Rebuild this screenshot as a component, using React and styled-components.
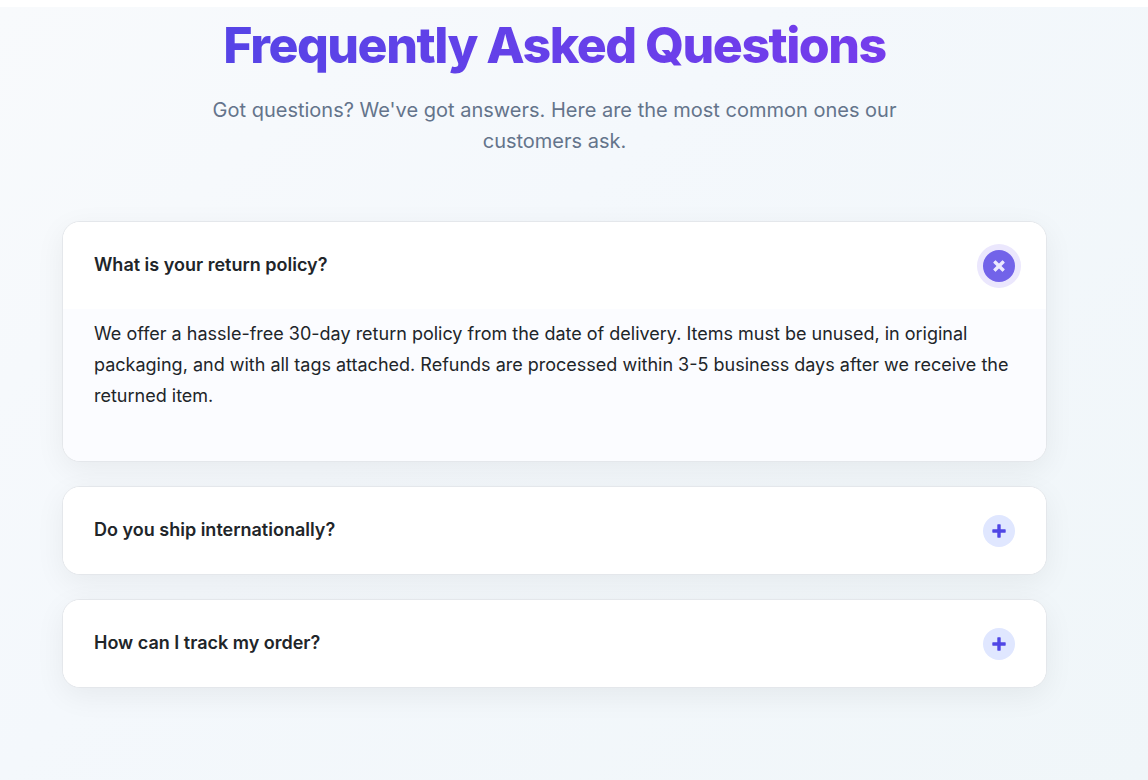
import { useState } from 'react';
import styled, { createGlobalStyle } from 'styled-components';

const faqs = [
    {
        id: 'returns',
        question: 'What is your return policy?',
        answer:
            'We offer a hassle-free 30-day return policy from the date of delivery. Items must be unused, in original packaging, and with all tags attached. Refunds are processed within 3-5 business days after we receive the returned item.',
    },
    {
        id: 'shipping',
        question: 'Do you ship internationally?',
        answer: 'Yes, we ship to most countries. Shipping costs are calculated at checkout.',
    },
    {
        id: 'tracking',
        question: 'How can I track my order?',
        answer: 'You will receive a tracking link by email as soon as your order ships.',
    },
];

const GlobalStyle = createGlobalStyle`
  *,
  *::before,
  *::after {
    box-sizing: border-box;
  }

  body {
    margin: 0;
    background: #fff;
    font-family: Inter, "Liberation Sans", sans-serif;
    color: #212529;
  }
`;

const Page = styled.div`
  min-height: 100vh;
  padding-top: 7px;
  display: flex;
  flex-direction: column;
`;

const Section = styled.section`
  flex: 1;
  padding: 8px 101px 92px 62px;
  background: linear-gradient(135deg, #f8fafc 0%, #f4f8fc 40%, #f0f6f9 100%);
`;

const Header = styled.header`
  margin-bottom: 64px;
  text-align: center;
`;

const Title = styled.h2`
  margin: 0 0 20px;
  font-size: 50px;
  line-height: 60px;
  font-weight: 800;
  letter-spacing: -0.03em;
  color: transparent;
  background: linear-gradient(90deg, #4f46e5, #7c3aed);
  background-clip: text;
  -webkit-background-clip: text;
`;

const Subtitle = styled.p`
  max-width: 700px;
  margin: 0 auto;
  font-size: 20px;
  line-height: 31px;
  color: #64748b;
`;

const Accordion = styled.div`
  display: flex;
  flex-direction: column;
  gap: 24px;
`;

const Item = styled.div`
  overflow: hidden;
  background: #fff;
  border: 1px solid #e4e7eb;
  border-radius: 18px;
  box-shadow: 0 8px 30px rgba(0, 0, 0, 0.06);
`;

const ItemHeading = styled.h3`
  margin: 0;
`;

const Question = styled.button`
  width: 100%;
  padding: 28px 31px 27px;
  display: flex;
  align-items: flex-start;
  justify-content: space-between;
  border: 0;
  background: #fff;
  color: inherit;
  font-family: inherit;
  font-size: 18px;
  line-height: 30px;
  font-weight: 600;
  text-align: left;
  cursor: pointer;
`;

const Toggle = styled.span`
  flex-shrink: 0;
  width: 32px;
  height: 32px;
  display: flex;
  align-items: center;
  justify-content: center;
  border-radius: 50%;
  color: ${({ $open }) => ($open ? '#ece9fe' : '#4f46e5')};
  background: ${({ $open }) => ($open ? '#7263e9' : '#e0e7ff')};
  box-shadow: ${({ $open }) => ($open ? '0 0 0 6px #ebe7fd' : 'none')};
  transform: ${({ $open }) => ($open ? 'rotate(45deg)' : 'none')};
  transition: transform 0.3s;
`;

const Answer = styled.div`
  padding: 9px 31px 50px;
  background: #fbfcff;
  font-size: 18px;
  line-height: 31px;
`;

function PlusIcon() {
    return (
        <svg width="14" height="14" viewBox="0 0 14 14" fill="currentColor" aria-hidden="true">
            <rect x="5.3" y="0.3" width="3.4" height="13.4" rx="0.6" />
            <rect x="0.3" y="5.3" width="13.4" height="3.4" rx="0.6" />
        </svg>
    );
}

export default function App() {
    const [openId, setOpenId] = useState('returns');

    return (
        <>
            <GlobalStyle />
            <Page>
                <Section>
                    <Header>
                        <Title>Frequently Asked Questions</Title>
                        <Subtitle>
                            Got questions? We've got answers. Here are the most common ones our customers ask.
                        </Subtitle>
                    </Header>
                    <Accordion>
                        {faqs.map(({ id, question, answer }) => {
                            const open = id === openId;
                            return (
                                <Item key={id}>
                                    <ItemHeading>
                                        <Question
                                            type="button"
                                            id={`${id}-question`}
                                            aria-expanded={open}
                                            aria-controls={`${id}-answer`}
                                            onClick={() => setOpenId(open ? null : id)}
                                        >
                                            {question}
                                            <Toggle $open={open}>
                                                <PlusIcon />
                                            </Toggle>
                                        </Question>
                                    </ItemHeading>
                                    <Answer
                                        id={`${id}-answer`}
                                        role="region"
                                        aria-labelledby={`${id}-question`}
                                        hidden={!open}
                                    >
                                        {answer}
                                    </Answer>
                                </Item>
                            );
                        })}
                    </Accordion>
                </Section>
            </Page>
        </>
    );
}
